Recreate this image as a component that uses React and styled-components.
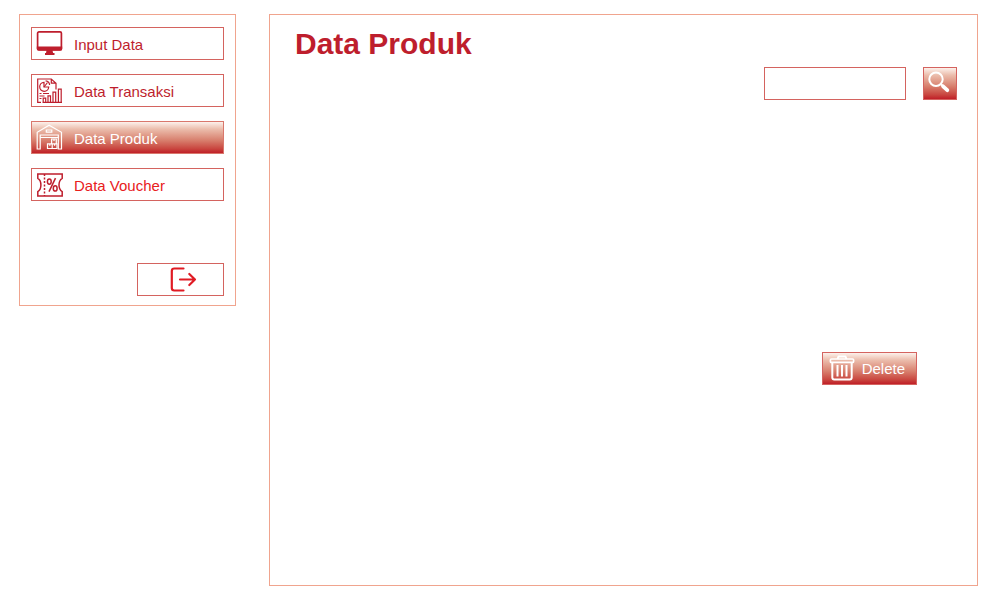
import React from "react";
import styled, { createGlobalStyle, css } from "styled-components";

const red = "#be1e2d";
const fade = "linear-gradient(#fff8f4 0%, #ebbcab 25%, #d8806e 58%, #c9463f 84%, #be1622 100%)";

const GlobalStyle = createGlobalStyle`
  *, *::before, *::after { box-sizing: border-box; }
  body {
    margin: 0;
    background: #fff;
    font-family: "Liberation Sans", Arial, Helvetica, sans-serif;
    font-size: 15px;
  }
`;

const Page = styled.div`
  display: flex;
  align-items: flex-start;
  gap: 33px;
  min-height: 100vh;
  padding: 14px 22px 14px 19px;
`;

const Sidebar = styled.aside`
  flex: 0 0 217px;
  display: flex;
  flex-direction: column;
  padding: 12px 11px 9px;
  border: 1px solid #f0a48e;
`;

const Nav = styled.nav`
  display: flex;
  flex-direction: column;
  gap: 14px;
`;

const framed = css`
  height: 33px;
  border: 1px solid #d4635f;
  border-radius: 0;
  background: #fff;
  font: inherit;
  line-height: 18px;
`;

const NavButton = styled.button`
  ${framed}
  display: flex;
  align-items: center;
  gap: 11px;
  padding: 0 4px;
  color: ${red};
  text-align: left;
  cursor: pointer;
  ${(p) => p.$active && css`
    background: ${fade};
    background-origin: border-box;
    border-color: #d9776c;
    color: #fff;
  `}
`;

const NavLabel = styled.span`
  padding-top: 2px;
  color: ${(p) => p.$color || "inherit"};
`;

const LogoutButton = styled.button`
  ${framed}
  align-self: flex-end;
  display: flex;
  align-items: center;
  justify-content: center;
  width: 87px;
  margin-top: 62px;
  padding: 0 0 0 6px;
  color: #e01b24;
  cursor: pointer;
`;

const Panel = styled.main`
  flex: 1;
  min-width: 0;
  min-height: calc(100vh - 28px);
  display: flex;
  flex-direction: column;
  padding: 12px 20px 20px 25px;
  border: 1px solid #f0a48e;
`;

const Title = styled.h1`
  margin: 0;
  color: ${red};
  font-size: 30px;
  line-height: 34px;
`;

const SearchForm = styled.form`
  display: flex;
  align-items: center;
  justify-content: flex-end;
  gap: 17px;
  margin-top: 6px;
`;

const SearchInput = styled.input`
  ${framed}
  width: 142px;
  padding: 0 8px;
  color: ${red};
`;

const ActionButton = styled.button`
  ${framed}
  display: flex;
  align-items: center;
  gap: 6px;
  padding: ${(p) => p.$pad};
  background: ${fade};
  background-origin: border-box;
  color: #fff;
  cursor: pointer;
`;

const Actions = styled.div`
  display: flex;
  justify-content: flex-end;
  margin-top: 252px;
  padding-right: 40px;
`;

const Icon = styled.svg`
  flex: none;
  display: block;
  fill: none;
  stroke: currentColor;
  stroke-width: ${(p) => p.$weight || 1.2};
`;

const MonitorIcon = () => (
  <Icon width="27" height="27" viewBox="0 0 27 27" $weight={1.7} aria-hidden="true">
    <rect x="1.6" y="1.9" width="23.8" height="18" rx="1.4" />
    <path d="M.8 16.5h25.4v2.6a1.5 1.5 0 0 1-1.5 1.5H2.3A1.5 1.5 0 0 1 .8 19.1z M10.5 20.5h6l.6 2.500h1.400v2h-9.500v-2h1z" fill="currentColor" stroke="none" />
  </Icon>
);

const ReportIcon = () => (
  <Icon width="27" height="27" viewBox="0 0 27 27" $weight={1.2} aria-hidden="true">
    <path d="M5 25.300H1.700V2h13.600l4.700 4.200v6.300M15.300 2v4.200H20" />
    <path d="M8 5.300a4.500 4.500 0 1 0 4.700 4.700H8z" />
    <path d="M9.600 3.800a4.500 4.500 0 0 1 4 4.300" />
    <path d="M8 10l3.500-4.500" />
    <path d="M3.500 16.500h2M7 16.500h6M3.500 19h5M3.500 21.500h2" />
    <path d="M7.200 25.300v-4.200h2.500v4.200M12 25.300v-6.500h2.500v6.500M17 25.300V15.200h2.700v10.100M22.400 25.300V12.200h2.800v13.100M6.500 25.400h19.500" />
  </Icon>
);

const WarehouseIcon = () => (
  <Icon width="27" height="27" viewBox="0 0 27 27" $weight={1.2} aria-hidden="true">
    <path d="M1.200 25V8.300L13.100 1.200 25.500 8.300V25h-3.200V11H4.200v14z" />
    <path d="M4.200 13.500h18.100M10.300 6h5.500v2.200h-5.500z" />
    <path d="M11.500 19.800h4.700v4.700h-4.700zM16.200 19.800h4.800v4.700h-4.800zM15.600 15h4.700v4.800h-4.700zM13.800 19.800v2M18.600 19.800v2M18 15v2" />
  </Icon>
);

const VoucherIcon = () => (
  <Icon width="27" height="27" viewBox="0 0 27 27" $weight={1.5} aria-hidden="true">
    <path d="M1.800 3h24.400v4.400c-2.300 1.400-3.200 3.700-3.200 6.600s.9 5.200 3.200 6.600V25H1.800v-4.400C4.100 19.200 4.900 16.900 4.900 14s-.8-5.200-3.100-6.600z" />
    <path d="M8.500 3v22" strokeDasharray="2 1.500" />
    <path d="M19.500 7.200l-6.500 13.500" />
    <ellipse cx="13.300" cy="10.600" rx="1.900" ry="2.700" />
    <ellipse cx="19.200" cy="17.400" rx="1.900" ry="2.700" />
  </Icon>
);

const LogoutIcon = () => (
  <Icon width="27" height="27" viewBox="0 0 27 27" $weight={2.2} strokeLinecap="round" strokeLinejoin="round" aria-hidden="true">
    <path d="M13.500 2.500H4.300Q1.800 2.500 1.800 5v17q0 2.500 2.500 2.500h9.200M10 13.500h15M19.300 8l5.700 5.500-5.700 5.500" />
  </Icon>
);

const SearchIcon = () => (
  <Icon width="23" height="25" viewBox="0 0 23 25" $weight={2} aria-hidden="true">
    <circle cx="8" cy="8.200" r="6.700" />
    <path d="M12.800 13l3 3" />
    <path d="M15.100 15.300l4.200 3.900" strokeWidth="3.800" strokeLinecap="round" />
  </Icon>
);

const TrashIcon = () => (
  <Icon width="27" height="27" viewBox="0 0 27 27" $weight={2} strokeLinejoin="round" aria-hidden="true">
    <path d="M3.300 7.500v15q0 2 2 2h15.400q2 0 2-2v-15" />
    <rect x="1.400" y="4" width="23.200" height="3.400" rx="1" strokeWidth="1.700" />
    <path d="M8.500 4l1-2.500h7l1 2.500M8.500 10v11.500M13 10v11.500M17.500 10v11.500" />
  </Icon>
);

const items = [
  { label: "Input Data", icon: MonitorIcon },
  { label: "Data Transaksi", icon: ReportIcon },
  { label: "Data Produk", icon: WarehouseIcon, active: true },
  { label: "Data Voucher", icon: VoucherIcon, color: "#e8201c" },
];

export default function App() {
  return (
    <>
      <GlobalStyle />
      <Page>
        <Sidebar>
          <Nav aria-label="Menu">
            {items.map(({ label, icon: Glyph, active, color }) => (
              <NavButton key={label} type="button" $active={active} aria-current={active ? "page" : undefined}>
                <Glyph />
                <NavLabel $color={color}>{label}</NavLabel>
              </NavButton>
            ))}
          </Nav>
          <LogoutButton type="button" aria-label="Keluar">
            <LogoutIcon />
          </LogoutButton>
        </Sidebar>
        <Panel>
          <Title>Data Produk</Title>
          <SearchForm onSubmit={(e) => e.preventDefault()}>
            <SearchInput type="text" aria-label="Cari produk" />
            <ActionButton type="submit" aria-label="Cari" $pad="0 5px 0 4px">
              <SearchIcon />
            </ActionButton>
          </SearchForm>
          <Actions>
            <ActionButton type="button" $pad="0 11px 0 6px">
              <TrashIcon />
              Delete
            </ActionButton>
          </Actions>
        </Panel>
      </Page>
    </>
  );
}
